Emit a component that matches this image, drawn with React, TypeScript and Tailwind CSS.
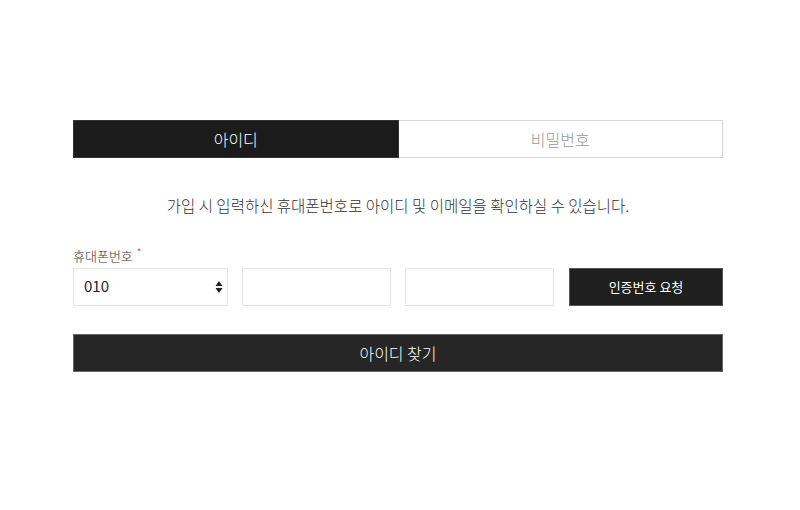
export default function App() {
  return (
    <div
      className="w-[800px] h-[510px] bg-white font-light"
      style={{ fontFamily: '"Noto Sans CJK KR", "Noto Sans", sans-serif' }}
    >
      <div className="w-[650px] ml-[73px] pt-[120px]">
        {/* 탭 */}
        <div className="flex h-[38px]">
          <div className="flex-1 flex items-center justify-center bg-[#1b1b1b] border border-[#333] text-white text-[16px]">
            아이디
          </div>
          <div className="flex-1 flex items-center justify-center bg-white border border-[#d5d5d5] border-l-0 text-[#999] text-[16px]">
            비밀번호
          </div>
        </div>

        <p className="mt-[36px] text-center text-[15.5px] text-[#333] leading-[22px]">
          가입 시 입력하신 휴대폰번호로 아이디 및 이메일을 확인하실 수 있습니다.
        </p>

        <div className="mt-[31px] text-[13px] text-[#333] leading-[18px] flex items-start">
          휴대폰번호
          <span className="text-[#e33] text-[11px] leading-[12px] ml-[4px] -mt-[1px]">*</span>
        </div>

        <div className="mt-[3px] flex gap-[14px] h-[38px]">
          <div className="w-[155px] border border-[#e5e5e5] flex items-center justify-between pl-[10px] pr-[4px] text-[15px] text-[#222] font-normal">
            <span className="-mt-[2px]">010</span>
            <svg width="8" height="14" viewBox="0 0 8 14">
              <path d="M4 1 L7.5 6 H0.5 Z" fill="#222" />
              <path d="M4 13 L7.5 8 H0.5 Z" fill="#222" />
            </svg>
          </div>
          <div className="w-[149px] border border-[#e5e5e5]" />
          <div className="w-[149px] border border-[#e5e5e5]" />
          <div className="flex-1 ml-[1px] bg-[#1f1f1f] border border-[#555] flex items-center justify-center text-white text-[13px] font-normal">
            인증번호 요청
          </div>
        </div>

        <div className="mt-[28px] h-[38px] bg-[#262626] border border-[#666] flex items-center justify-center text-white text-[16px]">
          아이디 찾기
        </div>
      </div>
    </div>
  );
}
